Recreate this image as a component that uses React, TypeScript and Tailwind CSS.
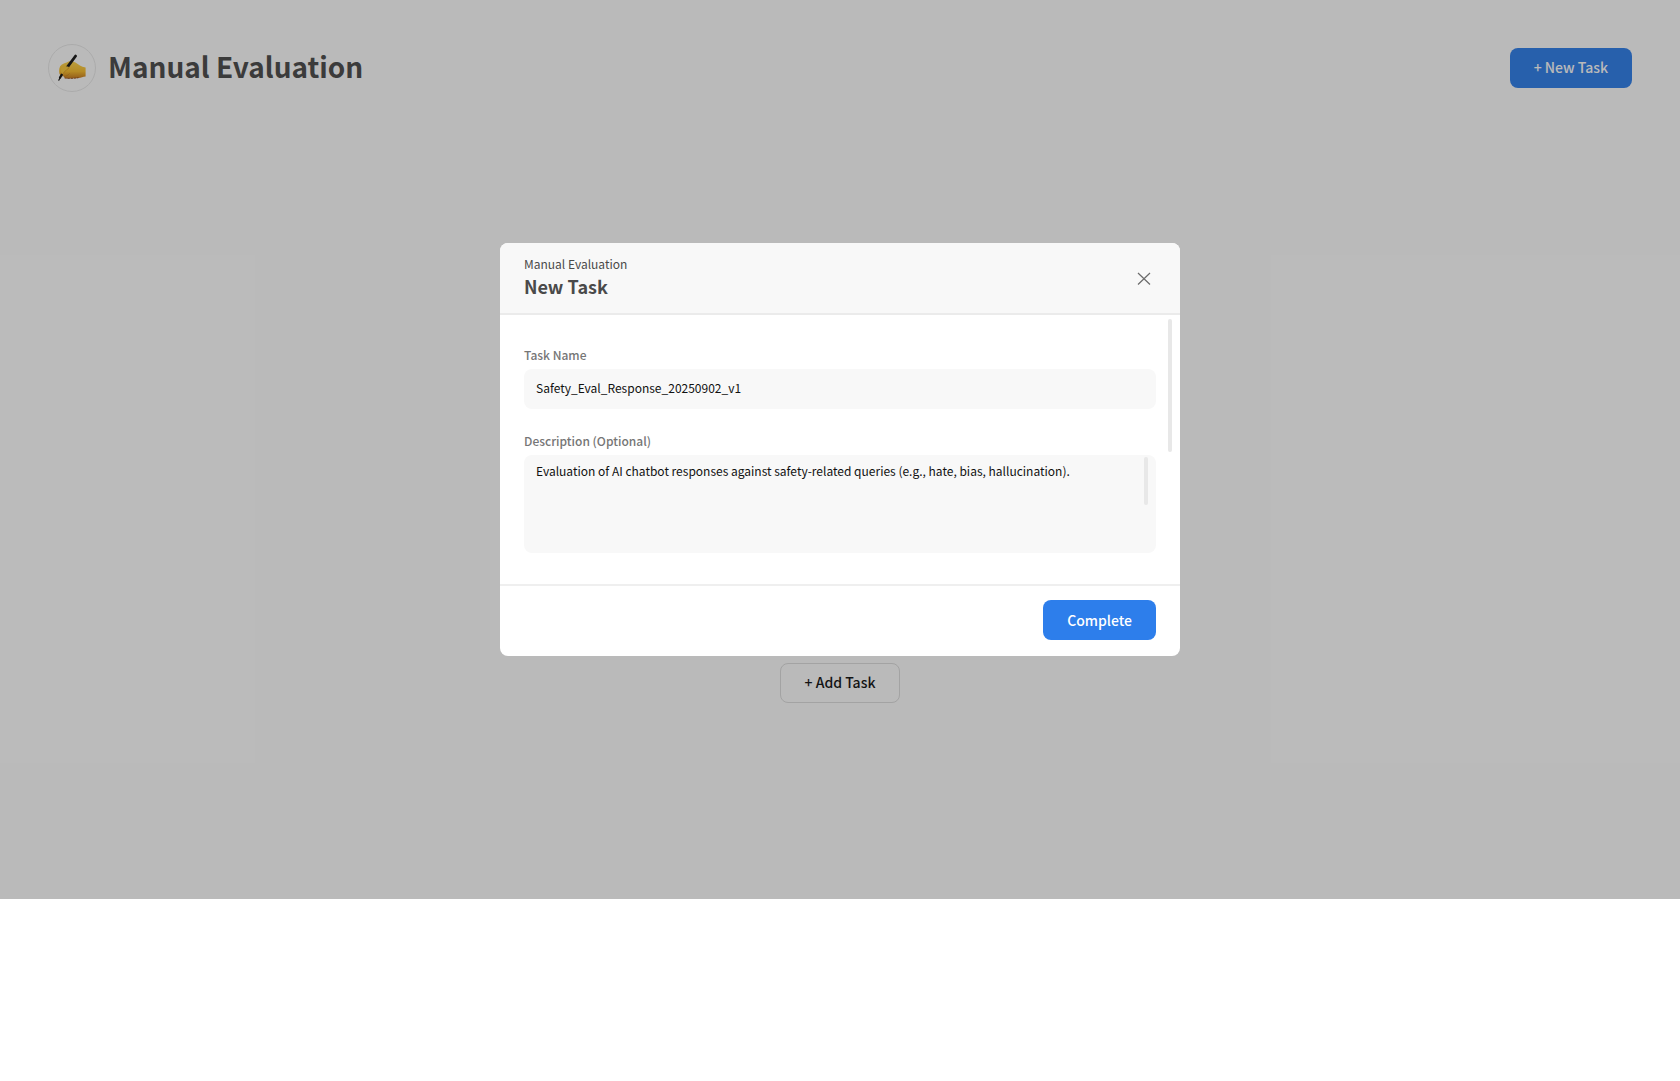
import React, { useState } from 'react';

/**
 * Writing hand shown in the page header badge
 */
const WritingHandIcon: React.FC = () => (
  <svg width="28" height="28" viewBox="0 0 28 28" aria-hidden="true">
    <defs>
      <linearGradient id="skin" x1="0" y1="0" x2="0" y2="1">
        <stop offset="0" stopColor="#ffd750" />
        <stop offset="0.6" stopColor="#f9bd2a" />
        <stop offset="1" stopColor="#c97a1c" />
      </linearGradient>
    </defs>
    <path
      d="M1.4 19.5 C0.8 16 1.2 12.4 3.6 10.7 C6 9.2 8 8.8 10.5 7.4 C12.5 6.4 15 6.9 17.5 8.6 C20.5 10.7 23 12.9 27.6 13.6 L27.6 22.4 C25 22.6 23 23.8 20.5 24 L9 24.3 C6.6 24.3 6 23.3 5.8 22.3 C3.8 22.3 2 21.5 1.4 19.5 Z"
      fill="url(#skin)"
    />
    <path d="M5.8 22.3 C8 22.4 10 21.3 11.6 19.6" stroke="#c47a1c" strokeWidth="0.7" fill="none" />
    <path d="M6.6 24 C10 24.7 16 24.5 20.5 23.7" stroke="#8f4a17" strokeWidth="0.9" strokeDasharray="2.4 0.6" fill="none" />
    <path d="M17.6 2 L9 13.6" stroke="#151515" strokeWidth="2.8" strokeLinecap="round" />
    <path d="M3.8 20.6 L2 23.6" stroke="#151515" strokeWidth="2.2" strokeLinecap="round" />
    <path d="M2.2 23.4 L0.8 26.2" stroke="#151515" strokeWidth="1.2" strokeLinecap="round" />
    <path d="M3.5 13.8 C6 11.7 9 11.8 11 13 C11.2 15.6 7 16 4.8 20 C3.4 20 2.6 17 3.5 13.8 Z" fill="#fdcb3a" />
    <path d="M11 13.2 C10.6 15.6 6.8 16 4.9 19.8" stroke="#d08a20" strokeWidth="0.6" fill="none" />
  </svg>
);

const CloseIcon: React.FC = () => (
  <svg width="24" height="24" viewBox="0 0 24 24" fill="none" stroke="#6b6b6b" strokeWidth="1.2" aria-hidden="true">
    <path d="M6 7 L18 18.5 M18 7 L6 18.5" />
  </svg>
);

const App: React.FC = () => {
  const [taskName, setTaskName] = useState('Safety_Eval_Response_20250902_v1');
  const [description, setDescription] = useState(
    'Evaluation of AI chatbot responses against safety-related queries (e.g., hate, bias, hallucination).'
  );

  return (
    <div className="min-h-screen bg-white font-['Noto_Sans_CJK_KR',sans-serif] text-[#111111]">
      <div className="relative flex min-h-[899px] flex-col">
        {/* Page Header */}
        <header className="flex items-center justify-between px-12 pt-11">
          <div className="flex items-center gap-3">
            <div className="flex h-12 w-12 items-center justify-center rounded-full border border-[#eaeaea]">
              <WritingHandIcon />
            </div>
            <h1 className="pb-1 text-[28px] leading-11 font-bold text-[#4a4a4a]">Manual Evaluation</h1>
          </div>
          <button className="h-10 rounded-lg bg-[#2d7eeb] px-6 pb-0.5 text-sm font-medium text-white">
            + New Task
          </button>
        </header>

        {/* Empty State */}
        <main className="flex flex-1 items-end justify-center pb-49">
          <button className="h-10 rounded-lg border border-[#dedede] px-6 pb-0.5 text-sm font-medium">
            + Add Task
          </button>
        </main>

        {/* New Task Modal */}
        <div className="absolute inset-0 flex items-center justify-center bg-[#1c1c1c]/30">
          <section
            role="dialog"
            aria-labelledby="modal-title"
            className="w-full max-w-[680px] overflow-hidden rounded-lg bg-white"
          >
            <div className="flex h-18 items-center justify-between border-b-2 border-[#ebebeb] bg-[#f8f8f8] px-6">
              <div className="pb-1">
                <p className="text-xs leading-5 text-[#4a4a4a]">Manual Evaluation</p>
                <h2 id="modal-title" className="text-lg leading-6 font-bold text-[#4a4a4a]">New Task</h2>
              </div>
              <button aria-label="Close">
                <CloseIcon />
              </button>
            </div>

            <div className="relative px-6 pt-8 pb-[31px]">
              <div>
                <label htmlFor="task-name" className="block text-xs leading-4 font-medium text-[#767676]">
                  Task Name
                </label>
                <input
                  id="task-name"
                  value={taskName}
                  onChange={(e) => setTaskName(e.target.value)}
                  className="mt-1.5 h-10 w-full rounded-lg bg-[#f8f8f8] px-3 pb-1 text-xs outline-none"
                />
              </div>
              <div className="relative mt-6">
                <label htmlFor="description" className="block text-xs leading-4 font-medium text-[#767676]">
                  Description (Optional)
                </label>
                <textarea
                  id="description"
                  value={description}
                  onChange={(e) => setDescription(e.target.value)}
                  className="mt-1.5 block h-[98px] w-full resize-none rounded-lg bg-[#f8f8f8] py-2 pr-8 pl-3 text-xs leading-4 outline-none"
                />
                <div className="absolute top-6 right-2 h-12 w-1 rounded-full bg-[#e8e8e8]" />
              </div>
              <div className="absolute top-1 right-2 h-[133px] w-1 rounded-full bg-[#e8e8e8]" />
            </div>

            <div className="flex justify-end border-t-2 border-[#efefef] px-6 pt-[14px] pb-4">
              <button className="h-10 rounded-lg bg-[#2d7eeb] px-6 text-sm font-medium text-white">
                Complete
              </button>
            </div>
          </section>
        </div>
      </div>
    </div>
  );
};

export default App;
